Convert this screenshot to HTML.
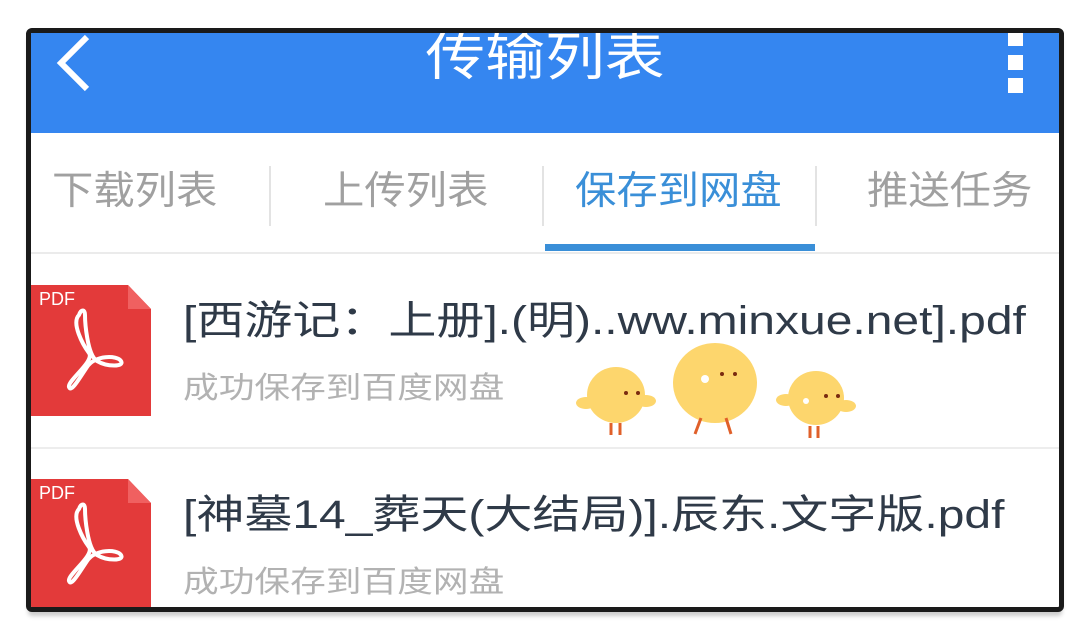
<!DOCTYPE html>
<html><head><meta charset="utf-8"><style>
body{margin:0;width:1084px;height:640px;background:#fff;overflow:hidden;position:relative;font-family:"Liberation Sans","Noto Sans CJK SC",sans-serif}
.frame{position:absolute;left:26px;top:28px;width:1028px;height:574px;border:5px solid #1a1a1a;border-radius:6px;overflow:hidden;background:#fff;box-shadow:0 6px 4px -2px #ccc}
.hdr{position:absolute;left:0;top:0;width:100%;height:100px;background:#3586f0}
.ttl{position:absolute;left:0;width:100%;top:-5px;text-align:center;color:#fff;font-size:52px;line-height:60px;transform:scaleX(1.15)}
.tab{position:absolute;top:134px;font-size:39px;color:#a0a0a0;line-height:50px;transform:scaleX(1.06);transform-origin:left}
.sep{position:absolute;top:133px;width:2px;height:60px;background:#e3e3e3}
.t{position:absolute;left:152px;font-size:40px;color:#2f3a48;line-height:50px;white-space:nowrap;transform:scaleX(1.2);transform-origin:left}
.s{position:absolute;left:152px;font-size:30px;color:#b2b2b2;line-height:40px;white-space:nowrap;transform:scaleX(1.19);transform-origin:left}
.pdf{position:absolute;left:0;width:120px;height:131px}
.chick{position:absolute}
</style></head><body>
<div class="frame">
<div class="hdr">
<svg style="position:absolute;left:22px;top:0" width="40" height="64"><path d="M34 4 L8 30 L34 56" stroke="#fff" stroke-width="6" fill="none"/></svg>
<div class="ttl">传输列表</div>
<div style="position:absolute;left:977px;top:0;width:15px;height:13px;background:#fff"></div>
<div style="position:absolute;left:977px;top:22px;width:15px;height:15px;background:#fff"></div>
<div style="position:absolute;left:977px;top:45px;width:15px;height:15px;background:#fff"></div>
</div>
<div class="tab" style="left:21px">下载列表</div>
<div class="sep" style="left:238px"></div>
<div class="tab" style="left:292px">上传列表</div>
<div class="sep" style="left:511px"></div>
<div class="tab" style="left:544px;color:#3a8fd8">保存到网盘</div>
<div class="sep" style="left:784px"></div>
<div class="tab" style="left:836px">推送任务</div>
<div style="position:absolute;left:514px;top:211px;width:270px;height:7px;background:#3a8fd8"></div>
<div style="position:absolute;left:0;top:219px;width:100%;height:2px;background:#ebebeb"></div>

<svg class="pdf" style="top:252px" viewBox="0 0 120 131"><path d="M0 0H97L120 24V131H0Z" fill="#e33a3a"/><path d="M97 0V24H120Z" fill="#f06060"/><text x="8" y="20" fill="#fff" font-size="18" font-family="Liberation Sans">PDF</text><path d="M48 30c-8 8 4 30 10 38s-22 28-20 34 10-8 18-20 30-12 34-6-14 6-24 0-12-40-12-46-4-6-6 0z" stroke="#fff" stroke-width="4" fill="none"/></svg>
<div class="t" style="top:263px">[西游记：上册].(明)..ww.minxue.net].pdf</div>
<div class="s" style="top:336px">成功保存到百度网盘</div>
<div style="position:absolute;left:0;top:414px;width:100%;height:2px;background:#ededed"></div>

<svg class="pdf" style="top:446px" viewBox="0 0 120 131"><path d="M0 0H97L120 24V131H0Z" fill="#e33a3a"/><path d="M97 0V24H120Z" fill="#f06060"/><text x="8" y="20" fill="#fff" font-size="18" font-family="Liberation Sans">PDF</text><path d="M48 30c-8 8 4 30 10 38s-22 28-20 34 10-8 18-20 30-12 34-6-14 6-24 0-12-40-12-46-4-6-6 0z" stroke="#fff" stroke-width="4" fill="none"/></svg>
<div class="t" style="top:457px">[神墓14_葬天(大结局)].辰东.文字版.pdf</div>
<div class="s" style="top:530px">成功保存到百度网盘</div>

<svg class="chick" style="left:545px;top:330px" width="80" height="75"><ellipse cx="40" cy="32" rx="29" ry="28" fill="#fdd66d"/><ellipse cx="10" cy="40" rx="10" ry="6" fill="#fdd66d"/><ellipse cx="70" cy="38" rx="10" ry="6" fill="#fdd66d"/><circle cx="50" cy="30" r="2" fill="#7a2b10"/><circle cx="62" cy="30" r="2" fill="#7a2b10"/><path d="M35 60v12M44 60v12" stroke="#e0602a" stroke-width="3"/></svg>
<svg class="chick" style="left:637px;top:305px" width="95" height="100"><ellipse cx="47" cy="45" rx="42" ry="40" fill="#fdd66d"/><circle cx="37" cy="41" r="4" fill="#fff"/><circle cx="54" cy="36" r="2" fill="#7a2b10"/><circle cx="67" cy="36" r="2" fill="#7a2b10"/><path d="M33 80l-6 16M58 80l5 16" stroke="#e0602a" stroke-width="3"/></svg>
<svg class="chick" style="left:745px;top:333px" width="80" height="75"><ellipse cx="40" cy="32" rx="28" ry="27" fill="#fdd66d"/><ellipse cx="10" cy="34" rx="10" ry="6" fill="#fdd66d"/><ellipse cx="70" cy="40" rx="10" ry="6" fill="#fdd66d"/><circle cx="30" cy="35" r="3" fill="#fff"/><circle cx="50" cy="30" r="2" fill="#7a2b10"/><circle cx="62" cy="30" r="2" fill="#7a2b10"/><path d="M34 60v12M42 60v12" stroke="#e0602a" stroke-width="3"/></svg>
</div>
</body></html>
